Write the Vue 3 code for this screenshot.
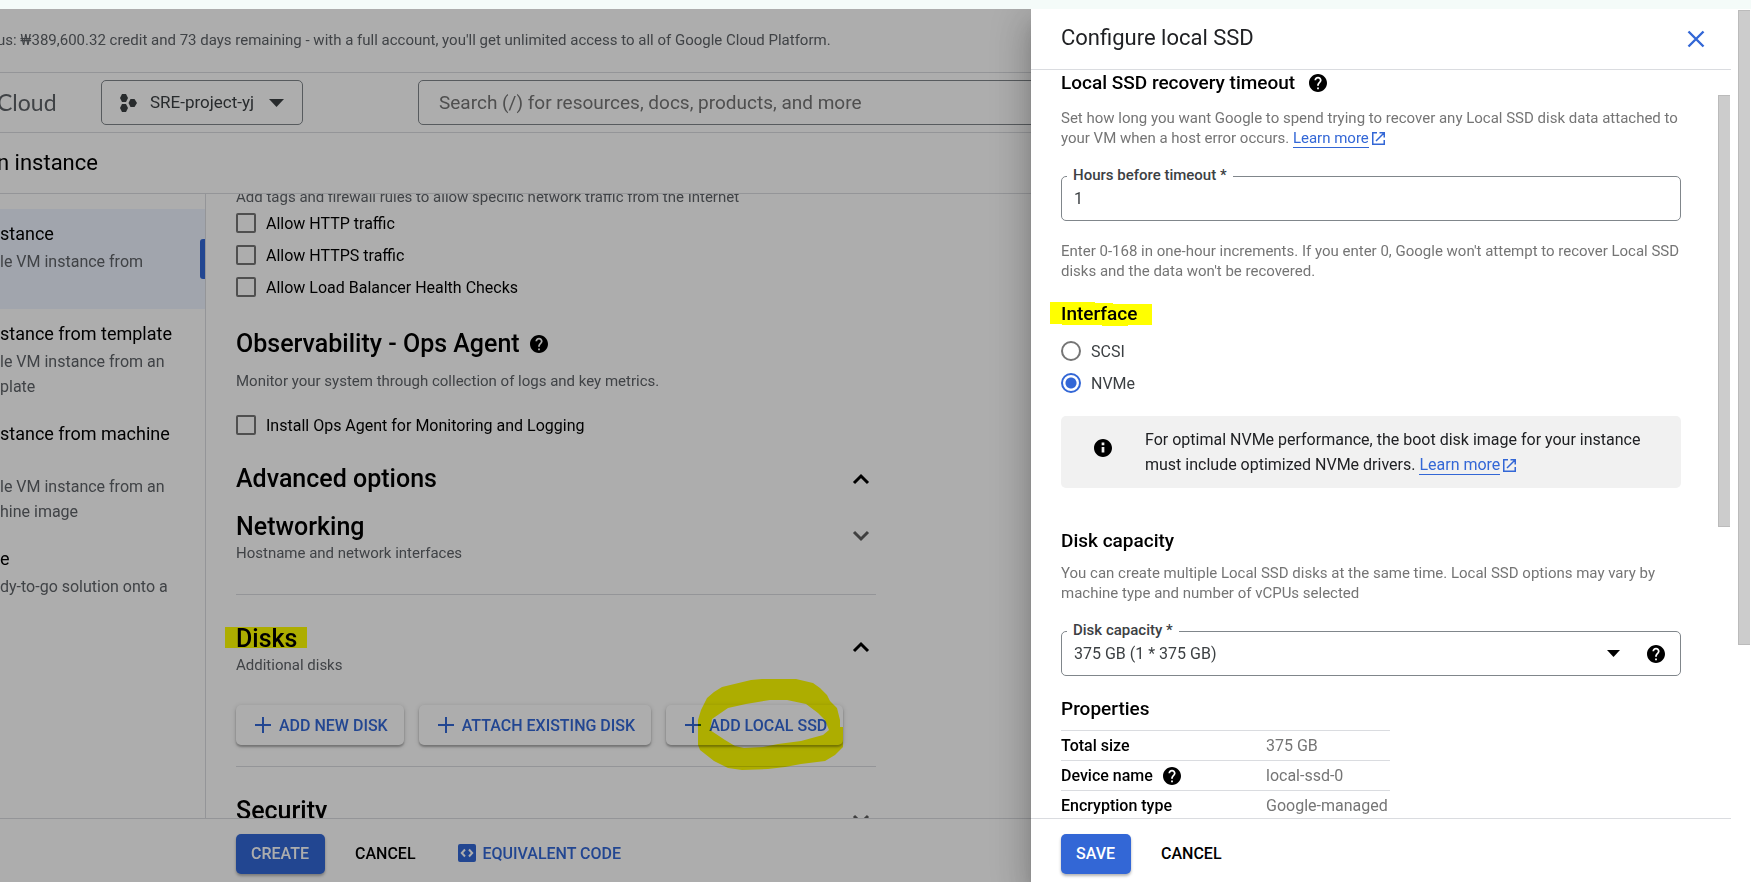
<script setup>
import { ref } from 'vue'

const HELP =
  'M12 2C6.48 2 2 6.48 2 12s4.48 10 10 10 10-4.48 10-10S17.52 2 12 2zm1 17h-2v-2h2v2zm2.07-7.75l-.9.92C13.45 12.9 13 13.5 13 15h-2v-.5c0-1.1.45-2.1 1.17-2.83l1.24-1.26c.37-.36.59-.86.59-1.41 0-1.1-.9-2-2-2s-2 .9-2 2H8c0-2.21 1.79-4 4-4s4 1.79 4 4c0 .88-.36 1.68-.93 2.25z'
const INFO = 'M12 2C6.48 2 2 6.48 2 12s4.48 10 10 10 10-4.48 10-10S17.52 2 12 2zm1.5 15h-3v-6h3v6zm0-8h-3V6h3v3z'
const UP = 'M2 10L9 3l7 7'
const DOWN = 'M2 3l7 7 7-7'

const navItems = [
  { title: 'stance', text: 'le VM instance from', active: true },
  { title: 'stance from template', text: 'le VM instance from an\nplate' },
  { title: 'stance from machine', text: 'le VM instance from an\nhine image', tall: true },
  { title: 'e', text: 'dy-to-go solution onto a' },
]

const firewall = ref([
  { id: 'http', label: 'Allow HTTP traffic', on: false },
  { id: 'https', label: 'Allow HTTPS traffic', on: false },
  { id: 'health', label: 'Allow Load Balancer Health Checks', on: false },
])
const opsAgent = ref(false)
const search = ref('')

const hours = ref('1')
const diskInterface = ref('NVMe')
const capacity = ref('375 GB (1 * 375 GB)')

const properties = [
  { name: 'Total size', value: '375 GB' },
  { name: 'Device name', value: 'local-ssd-0', help: true },
  { name: 'Encryption type', value: 'Google-managed' },
]
</script>

<template>
  <div class="page">
    <div class="strip"></div>
    <div class="frame">
      <div class="workspace">
        <div class="console">
          <div class="banner"><p>us: ₩389,600.32 credit and 73 days remaining - with a full account, you'll get unlimited access to all of Google Cloud Platform.</p></div>

          <header class="topbar">
            <span class="brand">Cloud</span>
            <button class="picker" type="button">
              <svg width="17" height="18" viewBox="0 0 17 18" fill="#3c4043">
                <path d="M2 0h4l2 4-2 4H2L0 4zM2 10h4l2 4-2 4H2l-2-4zM10.500 5h4L17 9l-2.500 4h-4L8.500 9z" />
              </svg>
              <span>SRE-project-yj</span>
              <svg class="picker-arrow" width="15" height="8" viewBox="0 0 15 8"><path d="M0 0h15L7.500 8z" fill="#3c4043" /></svg>
            </button>
            <input v-model="search" class="search" type="text" aria-label="Search" placeholder="Search (/) for resources, docs, products, and more" />
          </header>

          <div class="titlebar"><h1>n instance</h1></div>

          <div class="columns">
            <nav class="side">
              <a v-for="item in navItems" :key="item.title" href="#" class="nav-item" :class="{ active: item.active, tall: item.tall }">
                <span class="nav-title">{{ item.title }}</span>
                <span class="nav-text">{{ item.text }}</span>
              </a>
            </nav>

            <main class="main">
              <div class="form">
                <p class="desc">Add tags and firewall rules to allow specific network traffic from the Internet</p>
                <div class="checks">
                  <label v-for="c in firewall" :key="c.id" class="check">
                    <input v-model="c.on" type="checkbox" /><span>{{ c.label }}</span>
                  </label>
                </div>

                <div class="heading-row observability">
                  <h2>Observability - Ops Agent</h2>
                  <button class="icon-btn" type="button" aria-label="Help">
                    <svg width="18" height="18" viewBox="2 2 20 20"><path :d="HELP" /></svg>
                  </button>
                </div>
                <p class="desc monitor">Monitor your system through collection of logs and key metrics.</p>
                <label class="check ops">
                  <input v-model="opsAgent" type="checkbox" /><span>Install Ops Agent for Monitoring and Logging</span>
                </label>

                <div class="expander advanced">
                  <h2>Advanced options</h2>
                  <button class="icon-btn" type="button" aria-label="Collapse advanced options">
                    <svg class="chevron" width="18" height="13" viewBox="0 0 18 13"><path :d="UP" /></svg>
                  </button>
                </div>

                <section class="section first">
                  <div class="expander">
                    <div><h2>Networking</h2><p class="desc">Hostname and network interfaces</p></div>
                    <button class="icon-btn" type="button" aria-label="Expand networking">
                      <svg class="chevron dim" width="18" height="13" viewBox="0 0 18 13"><path :d="DOWN" /></svg>
                    </button>
                  </div>
                </section>

                <section class="section disks">
                  <div class="expander">
                    <div><h2><span class="marked">Disks</span></h2><p class="desc">Additional disks</p></div>
                    <button class="icon-btn" type="button" aria-label="Collapse disks">
                      <svg class="chevron" width="18" height="13" viewBox="0 0 18 13"><path :d="UP" /></svg>
                    </button>
                  </div>
                  <div class="disk-actions">
                    <button class="raised" type="button">
                      <svg width="16" height="16" viewBox="0 0 16 16"><path d="M8 0v16M0 8h16" /></svg>ADD NEW DISK
                    </button>
                    <button class="raised" type="button">
                      <svg width="16" height="16" viewBox="0 0 16 16"><path d="M8 0v16M0 8h16" /></svg>ATTACH EXISTING DISK
                    </button>
                    <div class="circled">
                      <button class="raised" type="button">
                        <svg width="16" height="16" viewBox="0 0 16 16"><path d="M8 0v16M0 8h16" /></svg>ADD LOCAL SSD
                      </button>
                      <svg class="ring" width="146" height="92" viewBox="0 0 146 92">
                        <path
                          fill-rule="evenodd"
                          d="M24 8L53 1L64 0H98L115 4L122 9L129 16L132 22L139 29L142 41V48H145V68L137 76L127 82L103 85L87 88L70 90L44 91L30 89L16 82L2 71L0 66V41L3 31L9 19L16 13ZM12 51L14 40L30 29L48 25L72 21H89L108 25L120 34L127 41L131 51L125 56L103 62L80 65L65 68L46 69L37 67L27 61Z"
                        />
                      </svg>
                    </div>
                  </div>
                </section>

                <section class="section">
                  <div class="expander">
                    <div><h2>Security</h2><p class="desc">&nbsp;</p></div>
                    <button class="icon-btn" type="button" aria-label="Expand security">
                      <svg class="chevron dim" width="18" height="13" viewBox="0 0 18 13"><path :d="DOWN" /></svg>
                    </button>
                  </div>
                </section>
              </div>
            </main>
          </div>

          <footer class="actions console-actions">
            <button class="primary" type="button">CREATE</button>
            <button class="flat" type="button">CANCEL</button>
            <button class="flat blue" type="button">
              <svg width="18" height="18" viewBox="0 0 18 18">
                <rect width="18" height="18" rx="2" fill="#3367d6" />
                <path d="M7 5.500L3.800 9 7 12.500M11 5.500L14.200 9 11 12.500" fill="none" stroke="#fff" stroke-width="2" />
              </svg>
              EQUIVALENT CODE
            </button>
          </footer>
        </div>

        <div class="scrim"></div>

        <aside class="drawer">
          <header class="drawer-head">
            <h2>Configure local SSD</h2>
            <button class="icon-btn" type="button" aria-label="Close">
              <svg width="18" height="18" viewBox="0 0 18 18"><path d="M1.500 1.500l15 15M16.500 1.500l-15 15" stroke="#3367d6" stroke-width="2.400" /></svg>
            </button>
          </header>

          <div class="drawer-body">
            <div class="drawer-content">
              <div class="heading-row recovery">
                <h3>Local SSD recovery timeout</h3>
                <button class="icon-btn" type="button" aria-label="Help">
                  <svg width="18" height="18" viewBox="2 2 20 20"><path :d="HELP" /></svg>
                </button>
              </div>
              <p class="desc recovery-text">
                Set how long you want Google to spend trying to recover any Local SSD disk data attached to your VM when a host error occurs.
                <a href="#"><span class="link-text">Learn more</span><svg class="ext" width="13" height="13" viewBox="0 0 13 13"><path d="M5 .75H.75v11.500h11.500V8M7.500.75h4.750V5.500M12 1L4 9" /></svg></a>
              </p>

              <div class="field">
                <label for="hours">Hours before timeout *</label>
                <input id="hours" v-model="hours" type="text" />
              </div>
              <p class="desc hint">Enter 0-168 in one-hour increments. If you enter 0, Google won't attempt to recover Local SSD disks and the data won't be recovered.</p>

              <h3 class="interface">
                <svg class="stroke" width="102" height="25" viewBox="0 0 102 25"><path d="M0 0h45v1h18v1h39v21H78v1H52v-1H12v-1H0z" /></svg>
                <span>Interface</span>
              </h3>
              <div class="radios">
                <label class="radio"><input v-model="diskInterface" type="radio" name="interface" value="SCSI" /><span>SCSI</span></label>
                <label class="radio"><input v-model="diskInterface" type="radio" name="interface" value="NVMe" /><span>NVMe</span></label>
              </div>

              <div class="note">
                <svg width="18" height="18" viewBox="2 2 20 20"><path :d="INFO" /></svg>
                <p>
                  For optimal NVMe performance, the boot disk image for your instance must include optimized NVMe drivers.
                  <a href="#"><span class="link-text">Learn more</span><svg class="ext" width="13" height="13" viewBox="0 0 13 13"><path d="M5 .75H.75v11.500h11.500V8M7.500.75h4.750V5.500M12 1L4 9" /></svg></a>
                </p>
              </div>

              <h3 class="capacity">Disk capacity</h3>
              <p class="desc capacity-text">You can create multiple Local SSD disks at the same time. Local SSD options may vary by machine type and number of vCPUs selected</p>

              <div class="field">
                <label for="capacity">Disk capacity *</label>
                <select id="capacity" v-model="capacity">
                  <option>375 GB (1 * 375 GB)</option>
                </select>
                <svg class="select-arrow" width="13" height="7" viewBox="0 0 13 7"><path d="M0 0h13L6.500 7z" /></svg>
                <button class="icon-btn field-help" type="button" aria-label="Help">
                  <svg width="18" height="18" viewBox="2 2 20 20"><path :d="HELP" /></svg>
                </button>
              </div>

              <h3 class="properties">Properties</h3>
              <table>
                <tbody>
                  <tr v-for="p in properties" :key="p.name">
                    <th scope="row">
                      <div class="prop">
                        {{ p.name }}
                        <button v-if="p.help" class="icon-btn" type="button" aria-label="Help">
                          <svg width="18" height="18" viewBox="2 2 20 20"><path :d="HELP" /></svg>
                        </button>
                      </div>
                    </th>
                    <td>{{ p.value }}</td>
                  </tr>
                </tbody>
              </table>
            </div>
            <div class="drawer-scroll"></div>
          </div>

          <footer class="actions drawer-actions">
            <button class="primary" type="button">SAVE</button>
            <button class="flat" type="button">CANCEL</button>
          </footer>
        </aside>
      </div>
      <div class="page-scroll"></div>
    </div>
  </div>
</template>

<style>
html,
body {
  margin: 0;
  background: #fff;
}
</style>

<style scoped>
* {
  box-sizing: border-box;
}
.page {
  height: 100vh;
  display: flex;
  flex-direction: column;
  overflow: hidden;
  font: 400 16px/25px Roboto, 'Noto Sans CJK KR', sans-serif;
  color: #000;
}
h1, h2, h3, p {
  margin: 0;
}
button, input, select {
  font: inherit;
  color: inherit;
}
button {
  border: 0;
  padding: 0;
  background: none;
  cursor: pointer;
}
svg {
  flex: none;
  display: block;
}
.strip {
  flex: none;
  height: 9px;
  background: #f4fbf9;
}
.frame {
  flex: 1;
  min-height: 0;
  display: flex;
}
.workspace {
  flex: 1;
  min-width: 0;
  position: relative;
  overflow: hidden;
}
.page-scroll {
  width: 12px;
  height: calc(73% - 2px);
  margin: 1px 1px 0 7px;
  background: #ccc;
  border: 1px solid #bbb;
  border-right: 0;
}
.console {
  height: 100%;
  display: flex;
  flex-direction: column;
}
.scrim {
  position: absolute;
  inset: 0;
  background: rgba(0, 0, 0, 0.32);
}

.banner p,
.brand,
.titlebar h1 {
  margin-left: -3px;
}
.banner {
  flex: none;
  height: 64px;
  line-height: 62px;
  font-size: 15px;
  color: #5f6368;
  white-space: nowrap;
  border-bottom: 1px solid #dadce0;
}
.topbar {
  flex: none;
  height: 60px;
  display: flex;
  align-items: center;
  border-bottom: 1px solid #dadce0;
}
.brand {
  width: 104px;
  padding-bottom: 2px;
  font: 400 23px/30px Lato, sans-serif;
  color: #5f6368;
}
.picker {
  height: 45px;
  width: 202px;
  padding: 0 18px;
  display: flex;
  align-items: center;
  border: 1px solid #80868b;
  border-radius: 5px;
  font-size: 17px;
  color: #3c4043;
}
.picker span {
  margin-left: 13px;
}
.picker-arrow {
  margin-left: auto;
}
.search {
  flex: 1;
  height: 45px;
  margin-left: 115px;
  padding: 0 20px;
  border: 1px solid #80868b;
  border-radius: 5px;
  font-size: 19px;
  background: #fff;
}
.search::placeholder {
  color: #757575;
  opacity: 1;
}
.titlebar {
  flex: none;
  height: 61px;
  border-bottom: 1px solid #dadce0;
}
.titlebar h1 {
  font: 400 22px/60px Roboto, sans-serif;
}
.columns {
  flex: 1;
  min-height: 0;
  display: flex;
  overflow: hidden;
}
.side {
  flex: none;
  width: 206px;
  padding-top: 15px;
  border-right: 1px solid #dadce0;
}
.nav-item {
  display: block;
  min-height: 100px;
  padding: 12px 0 10px;
  color: #000;
  text-decoration: none;
  white-space: pre;
  position: relative;
}
.nav-item.active {
  background: #eef3ff;
}
.nav-item.active::after {
  content: '';
  position: absolute;
  right: 0;
  top: 30px;
  width: 5px;
  height: 40px;
  border-radius: 3px 0 0 3px;
  background: #3367d6;
}
.nav-title {
  display: block;
  margin-bottom: 3px;
  font-size: 18px;
}
.nav-item.tall .nav-title {
  min-height: 50px;
}
.nav-text {
  display: block;
  color: #5f6368;
}
.main {
  flex: 1;
  min-width: 0;
  padding-left: 30px;
  overflow: hidden;
}
.form {
  max-width: 640px;
  margin-top: -7px;
}
.desc {
  font-size: 15px;
  line-height: 20px;
  color: #5f6368;
}
.checks {
  display: grid;
  gap: 12px;
  margin-top: 6px;
}
.check, .radio {
  display: flex;
  align-items: center;
  height: 20px;
}
.check input {
  appearance: none;
  width: 20px;
  height: 20px;
  margin: 0 10px 0 0;
  border: 2px solid #757575;
  border-radius: 2px;
}
.heading-row {
  display: flex;
  align-items: center;
}
.observability {
  margin-top: 32px;
  gap: 10px;
}
.form h2 {
  font: 500 25px/30px Roboto, sans-serif;
}
.monitor {
  margin-top: 12px;
}
.ops {
  margin-top: 24px;
}
.expander {
  display: flex;
  align-items: center;
  justify-content: space-between;
  padding-right: 6px;
}
.expander .desc {
  margin-top: 1px;
}
.section .icon-btn {
  padding-bottom: 4px;
}
.chevron {
  fill: none;
  stroke: #000;
  stroke-width: 3;
}
.chevron.dim {
  stroke: #5f5f5f;
}
.advanced {
  margin-top: 29px;
  margin-bottom: 18px;
}
.section {
  padding: 29px 0 31px;
  border-bottom: 1px solid #dadce0;
}
.section.first {
  padding-top: 0;
}
.section.disks {
  padding-bottom: 21px;
}
.marked {
  position: relative;
}
.marked::after {
  content: '';
  position: absolute;
  inset: 3px -10px 5px -11px;
  background: #ff0;
  mix-blend-mode: multiply;
}
.disk-actions {
  display: flex;
  gap: 15px;
  margin-top: 30px;
}
.raised {
  height: 40px;
  padding: 0 16px 0 19px;
  display: flex;
  align-items: center;
  gap: 8px;
  border-radius: 5px;
  background: #fff;
  font-weight: 500;
  color: #3367d6;
  white-space: nowrap;
  box-shadow: 0 2px 2px rgba(0, 0, 0, 0.25), 0 1px 5px rgba(0, 0, 0, 0.18);
}
.raised svg {
  stroke: #3367d6;
  stroke-width: 2;
}
.circled {
  position: relative;
}
.ring {
  position: absolute;
  left: 32px;
  top: -26px;
  fill: #ff0;
  mix-blend-mode: multiply;
  pointer-events: none;
}

.actions {
  flex: none;
  height: 64px;
  padding: 0 30px;
  display: flex;
  align-items: flex-start;
  border-top: 1px solid #dadce0;
  background: #fff;
}
.console-actions {
  padding-left: 236px;
}
.primary, .flat {
  height: 40px;
  margin-top: 15px;
  padding-bottom: 2px;
  font-weight: 500;
}
.primary {
  padding-left: 15px;
  padding-right: 16px;
  border-radius: 5px;
  background: #3367d6;
  color: #fff;
  box-shadow: 0 2px 3px rgba(0, 0, 0, 0.3);
}
.flat {
  display: flex;
  align-items: center;
  gap: 7px;
  margin-left: 30px;
}
.flat.blue {
  margin-left: 42px;
  color: #3367d6;
}

.drawer {
  position: absolute;
  top: 0;
  right: 0;
  bottom: 0;
  width: 700px;
  max-width: 100%;
  display: flex;
  flex-direction: column;
  background: #fff;
  box-shadow: 0 10px 12px -6px rgba(0, 0, 0, 0.2), 0 20px 30px 3px rgba(0, 0, 0, 0.14), 0 8px 38px 6px rgba(0, 0, 0, 0.12);
}
.drawer-head {
  flex: none;
  height: 61px;
  padding: 0 26px 0 30px;
  display: flex;
  align-items: center;
  justify-content: space-between;
  border-bottom: 1px solid #dadce0;
}
.drawer-head h2 {
  padding-bottom: 2px;
  font: 400 22px/30px Roboto, sans-serif;
  color: #202124;
}
.drawer-body {
  flex: 1;
  min-height: 0;
  display: flex;
  overflow: hidden;
}
.drawer-content {
  flex: 1;
  min-width: 0;
  padding: 0 37px 0 30px;
}
.drawer-scroll {
  width: 12px;
  height: 432px;
  margin: 25px 1px 0 0;
  background: #ccc;
  border: 1px solid #bbb;
  border-right: 0;
}
.drawer h3 {
  font: 500 19px/26px Roboto, sans-serif;
}
.drawer .desc {
  color: #757575;
}
.recovery {
  gap: 14px;
}
.recovery-text {
  margin-top: 12px;
}
a {
  color: #3367d6;
  text-decoration: none;
  white-space: nowrap;
}
.link-text {
  border-bottom: 1px solid #3367d6;
}
.ext {
  display: inline-block;
  margin-left: 3px;
  vertical-align: -2px;
  fill: none;
  stroke: #3367d6;
  stroke-width: 1.500;
}
.field {
  position: relative;
  margin-top: 28px;
}
.field label {
  position: absolute;
  left: 6px;
  top: -11px;
  padding: 0 6px;
  font-size: 15px;
  font-weight: 500;
  line-height: 20px;
  color: #3c4043;
  background: #fff;
}
.field input, .field select {
  display: block;
  appearance: none;
  width: 100%;
  height: 45px;
  padding: 0 12px;
  border: 1px solid #80868b;
  border-radius: 5px;
  background: #fff;
  color: #3c4043;
}
.select-arrow {
  position: absolute;
  right: 61px;
  top: 19px;
  pointer-events: none;
}
.field-help {
  position: absolute;
  right: 16px;
  top: 14px;
}
.hint {
  margin-top: 20px;
}
.interface {
  margin-top: 20px;
  position: relative;
}
.interface span {
  position: relative;
}
.stroke {
  position: absolute;
  left: -11px;
  top: 1px;
  fill: #ff0;
}
.radios {
  display: grid;
  gap: 12px;
  margin-top: 14px;
}
.radio input {
  appearance: none;
  width: 20px;
  height: 20px;
  margin: 0 10px 0 0;
  border: 2px solid #757575;
  border-radius: 50%;
}
.radio input:checked {
  border-color: #3367d6;
  background: radial-gradient(circle, #3367d6 5px, #fff 6px);
}
.radio span {
  color: #3c4043;
}
.note {
  margin-top: 23px;
  padding: 11px 30px 11px 33px;
  display: flex;
  align-items: center;
  gap: 33px;
  border-radius: 5px;
  background: #f1f1f1;
  color: #202124;
}
.note > svg {
  margin-bottom: 8px;
}
.capacity {
  margin-top: 40px;
}
.capacity-text {
  margin-top: 9px;
}
.drawer .properties {
  margin-top: 20px;
}
table {
  width: 329px;
  margin-top: 8px;
  border-collapse: collapse;
}
th, td {
  height: 30px;
  padding: 0;
  border-top: 1px solid #dadce0;
  text-align: left;
}
th {
  width: 205px;
  font-weight: 500;
}
.prop {
  display: flex;
  align-items: center;
  gap: 10px;
}
td {
  color: #757575;
}
</style>
